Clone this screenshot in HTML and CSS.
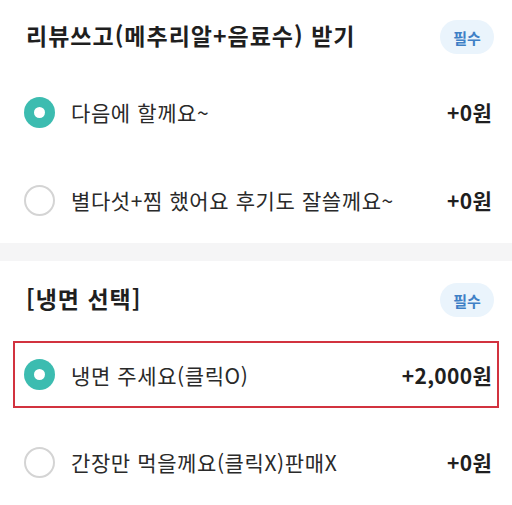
FILE: index.html
```html
<!DOCTYPE html>
<html lang="ko">
<head>
    <meta charset="UTF-8">
    <meta name="viewport" content="width=device-width, initial-scale=1.0">
    <title>옵션 선택</title>
    <link rel="stylesheet" href="styles.css">
</head>
<body>
    <section class="option-group">
        <div class="group-header">
            <h2 class="group-title">리뷰쓰고(메추리알+음료수) 받기</h2>
            <span class="badge">필수</span>
        </div>
        <div class="option-list">
            <label class="option">
                <span class="radio checked"></span>
                <span class="option-name">다음에 할께요~</span>
                <span class="option-price">+0원</span>
            </label>
            <label class="option">
                <span class="radio"></span>
                <span class="option-name">별다섯+찜 했어요 후기도 잘쓸께요~</span>
                <span class="option-price">+0원</span>
            </label>
        </div>
    </section>

    <div class="divider"></div>

    <section class="option-group">
        <div class="group-header">
            <h2 class="group-title">[냉면 선택]</h2>
            <span class="badge">필수</span>
        </div>
        <div class="option-list">
            <label class="option highlight">
                <span class="radio checked"></span>
                <span class="option-name">냉면 주세요(클릭O)</span>
                <span class="option-price">+2,000원</span>
            </label>
            <label class="option">
                <span class="radio"></span>
                <span class="option-name">간장만 먹을께요(클릭X)판매X</span>
                <span class="option-price">+0원</span>
            </label>
        </div>
    </section>
</body>
</html>
```

FILE: styles.css
```css
* {
    margin: 0;
    padding: 0;
    box-sizing: border-box;
}

body {
    font-family: 'Noto Sans CJK KR', 'Noto Sans', sans-serif;
    background: #ffffff;
    color: #222222;
    width: 512px;
}

.option-group {
    padding-top: 20px;
}

.group-header {
    display: flex;
    align-items: center;
    justify-content: space-between;
    height: 34px;
    padding: 0 18px 0 26px;
}

.group-title {
    font-size: 23px;
    font-weight: 700;
    color: #1f1f1f;
    letter-spacing: 1px;
    margin-top: -4px;
}

.badge {
    display: flex;
    align-items: center;
    justify-content: center;
    width: 54px;
    height: 34px;
    border-radius: 17px;
    background: #eaf4fc;
    color: #3f80c6;
    font-size: 15px;
    font-weight: 700;
}

.option-list {
    display: flex;
    flex-direction: column;
    gap: 20px;
    margin-top: 24px;
}

.option {
    display: flex;
    align-items: center;
    height: 68px;
    margin: 0 13px;
    padding: 0 5px 0 9px;
    border: 2px solid transparent;
}

.option.highlight {
    height: 67px;
    border-color: #d2323f;
}

.radio {
    width: 31px;
    height: 31px;
    border-radius: 50%;
    border: 2px solid #d4d4d4;
    flex-shrink: 0;
    display: flex;
    align-items: center;
    justify-content: center;
}

.radio.checked {
    border: none;
    background: #3cbcb0;
}

.radio.checked::after {
    content: '';
    width: 11px;
    height: 11px;
    border-radius: 50%;
    background: #ffffff;
}

.option-name {
    flex: 1;
    margin-left: 16px;
    font-size: 21px;
    letter-spacing: 0.6px;
    color: #2a2a2a;
}

.option-price {
    font-size: 21px;
    font-weight: 700;
    letter-spacing: 0.3px;
    color: #1f1f1f;
}

.divider {
    height: 18px;
    margin-top: 9px;
    background: #f5f5f6;
}

.divider + .option-group {
    padding-top: 22px;
}
```
